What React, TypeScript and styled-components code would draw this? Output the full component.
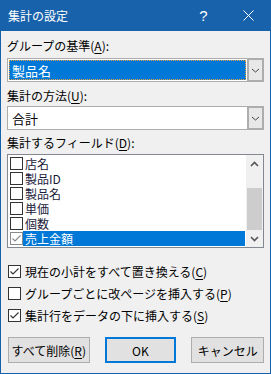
import React from 'react';
import styled, { createGlobalStyle, css } from 'styled-components';

const ACCENT = '#1862ab';
const SELECT = '#0078d7';

const GlobalStyle = createGlobalStyle`
  html, body {
    margin: 0;
    padding: 0;
    background: #f0f0f0;
  }
  body {
    font-family: "Noto Sans CJK JP", "Noto Sans", sans-serif;
    font-size: 12px;
    color: #000;
  }
`;

const Window = styled.div`
  width: 271px;
  height: 374px;
  box-sizing: border-box;
  border: 1px solid ${ACCENT};
  border-top: none;
  background: #f0f0f0;
  display: flex;
  flex-direction: column;
`;

const TitleBar = styled.div`
  height: 31px;
  background: ${ACCENT};
  color: #fff;
  display: flex;
  align-items: center;
  padding-left: 8px;
  font-size: 12px;
  margin: 0 -1px;

  .title {
    flex: 1;
  }
`;

const TitleButton = styled.div`
  width: 45px;
  height: 31px;
  display: flex;
  align-items: center;
  justify-content: center;
  font-family: "Liberation Sans", sans-serif;
  font-size: 15px;
`;

const Body = styled.div`
  display: flex;
  flex-direction: column;
  padding: 6px 6px 0 6px;
`;

const Label = styled.div<{ top?: number }>`
  height: 16px;
  line-height: 16px;
  margin-top: ${(p) => p.top ?? 0}px;
  white-space: nowrap;

  u {
    text-decoration: underline;
    text-underline-offset: 2px;
  }
`;

const Combo = styled.div<{ top?: number }>`
  margin-top: ${(p) => p.top ?? 0}px;
  height: 24px;
  box-sizing: border-box;
  border: 1px solid #adadad;
  background: #fff;
  display: flex;
  align-items: stretch;
`;

const ComboValue = styled.div<{ selected?: boolean }>`
  flex: 1;
  display: flex;
  align-items: center;
  padding-left: 3px;
  margin: 1px;
  font-size: 13px;

  ${(p) => p.selected && css`
    background: ${SELECT};
    color: #fff;
    outline: 1px dotted #e8a040;
    outline-offset: -1px;
  `}
`;

const ComboButton = styled.div`
  width: 17px;
  margin: -1px -1px -1px 0;
  box-sizing: border-box;
  border: 2px solid #adadad;
  background: #e8e8e8;
  display: flex;
  align-items: center;
  justify-content: center;
`;

const ListBox = styled.div`
  margin-top: 3px;
  height: 94px;
  box-sizing: border-box;
  border: 1px solid #828790;
  background: #fff;
  display: flex;
`;

const ListItems = styled.div`
  flex: 1;
  padding: 1px 1px 0 2px;
  display: flex;
  flex-direction: column;
`;

const ListRow = styled.div`
  height: 15px;
  display: flex;
  align-items: center;
`;

const ListText = styled.div<{ selected?: boolean }>`
  flex: 1;
  height: 15px;
  line-height: 15px;
  padding-left: 2px;
  font-size: 12px;
  color: #1a1a3a;
  overflow: hidden;

  ${(p) => p.selected && css`
    background: ${SELECT};
    color: #fff;
  `}
`;

const Box = styled.div<{ faded?: boolean }>`
  width: 13px;
  height: 13px;
  box-sizing: border-box;
  border: 1px solid ${(p) => (p.faded ? '#8a8a8a' : '#333')};
  background: #fff;
  flex-shrink: 0;
  display: flex;
  align-items: center;
  justify-content: center;
`;

const ScrollBar = styled.div`
  width: 17px;
  background: #f0f0f0;
  display: flex;
  flex-direction: column;
`;

const ScrollArrow = styled.div`
  height: 17px;
  display: flex;
  align-items: center;
  justify-content: center;
`;

const ScrollTrack = styled.div`
  flex: 1;
  display: flex;
  flex-direction: column;
  justify-content: flex-end;
`;

const Thumb = styled.div`
  height: 42px;
  margin: 0 1px;
  background: #cdcdcd;
`;

const CheckRow = styled.div<{ top?: number }>`
  margin-top: ${(p) => p.top ?? 0}px;
  height: 13px;
  display: flex;
  align-items: center;
  gap: 4px;
  padding-left: 1px;
  white-space: nowrap;

  span {
    line-height: 13px;
  }
  u {
    text-underline-offset: 2px;
  }
`;

const ButtonRow = styled.div`
  margin-top: 15px;
  display: flex;
  gap: 15px;
  padding-left: 1px;
`;

const Button = styled.div<{ width: number; primary?: boolean }>`
  width: ${(p) => p.width}px;
  height: 26px;
  box-sizing: border-box;
  background: #e1e1e1;
  border: 1px solid #adadad;
  display: flex;
  align-items: center;
  justify-content: center;
  font-size: 12px;

  ${(p) => p.primary && css`
    border: 2px solid ${SELECT};
  `}

  u {
    text-underline-offset: 2px;
  }
`;

const Check = ({ color = '#333' }: { color?: string }) => (
  <svg width="11" height="11" viewBox="0 0 11 11">
    <path d="M1.5 5.5 L4 8 L9.5 2.5" fill="none" stroke={color} strokeWidth="1.1" />
  </svg>
);

const Chevron = ({ up }: { up?: boolean }) => (
  <svg width="9" height="6" viewBox="0 0 9 6">
    <path
      d={up ? 'M1 5 L4.5 1.5 L8 5' : 'M1 1 L4.5 4.5 L8 1'}
      fill="none"
      stroke="#555"
      strokeWidth="1.6"
    />
  </svg>
);

const SmallChevron = () => (
  <svg width="9" height="5" viewBox="0 0 9 5">
    <path d="M1 1 L4.5 4 L8 1" fill="none" stroke="#444" strokeWidth="1" />
  </svg>
);

const fields = [
  { name: '店名' },
  { name: '製品ID' },
  { name: '製品名' },
  { name: '単価' },
  { name: '個数' },
  { name: '売上金額', checked: true, selected: true },
];

export default function App(): JSX.Element {
  return (
    <>
      <GlobalStyle />
      <Window>
        <TitleBar>
          <div className="title">集計の設定</div>
          <TitleButton>?</TitleButton>
          <TitleButton>
            <svg width="11" height="11" viewBox="0 0 11 11">
              <path d="M0.5 0.5 L10.5 10.5 M10.5 0.5 L0.5 10.5" stroke="#fff" strokeWidth="1" />
            </svg>
          </TitleButton>
        </TitleBar>
        <Body>
          <Label top={1}>グループの基準(<u>A</u>):</Label>
          <Combo top={4}>
            <ComboValue selected>製品名</ComboValue>
            <ComboButton><SmallChevron /></ComboButton>
          </Combo>
          <Label top={6}>集計の方法(<u>U</u>):</Label>
          <Combo top={2}>
            <ComboValue>合計</ComboValue>
            <ComboButton><SmallChevron /></ComboButton>
          </Combo>
          <Label top={5}>集計するフィールド(<u>D</u>):</Label>
          <ListBox>
            <ListItems>
              {fields.map((f) => (
                <ListRow key={f.name}>
                  <Box faded={f.checked}>{f.checked && <Check color="#888" />}</Box>
                  <ListText selected={f.selected}>{f.name}</ListText>
                </ListRow>
              ))}
            </ListItems>
            <ScrollBar>
              <ScrollArrow><Chevron up /></ScrollArrow>
              <ScrollTrack><Thumb /></ScrollTrack>
              <ScrollArrow><Chevron /></ScrollArrow>
            </ScrollBar>
          </ListBox>
          <CheckRow top={17}>
            <Box><Check /></Box>
            <span>現在の小計をすべて置き換える(<u>C</u>)</span>
          </CheckRow>
          <CheckRow top={9}>
            <Box />
            <span>グループごとに改ページを挿入する(<u>P</u>)</span>
          </CheckRow>
          <CheckRow top={9}>
            <Box><Check /></Box>
            <span>集計行をデータの下に挿入する(<u>S</u>)</span>
          </CheckRow>
          <ButtonRow>
            <Button width={83}>すべて削除(<u>R</u>)</Button>
            <Button width={73} primary>OK</Button>
            <Button width={74}>キャンセル</Button>
          </ButtonRow>
        </Body>
      </Window>
    </>
  );
}
